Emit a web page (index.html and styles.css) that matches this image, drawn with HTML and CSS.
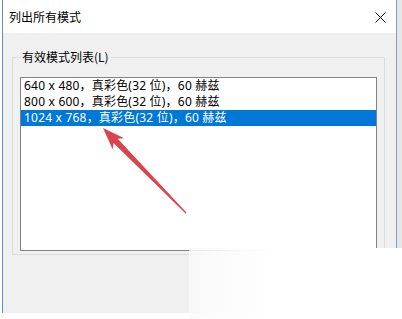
FILE: index.html
```html
<!DOCTYPE html>
<html lang="zh-CN">
<head>
<meta charset="utf-8">
<link rel="stylesheet" href="styles.css">
</head>
<body>
<div class="page">
  <div class="window">
    <div class="titlebar">
      <span class="title">列出所有模式</span>
      <svg class="close" width="11" height="11" viewBox="0 0 11 11"><path d="M0.5 0.5 L10.5 10.5 M10.5 0.5 L0.5 10.5" stroke="#111" stroke-width="1" fill="none"/></svg>
    </div>
    <div class="body">
      <fieldset class="group">
        <legend class="legend">有效模式列表(L)</legend>
        <div class="listbox">
          <div class="row">640 x 480，真彩色(32 位)，60 赫兹</div>
          <div class="row">800 x 600，真彩色(32 位)，60 赫兹</div>
          <div class="row selected">1024 x 768，真彩色(32 位)，60 赫兹</div>
        </div>
      </fieldset>
    </div>
  </div>
  <div class="behind"></div>
</div>
<div class="watermark"></div>
<svg class="arrow" width="402" height="319" viewBox="0 0 402 319">
  <polygon points="103,128 124.1,138.2 117.7,138.8 186.4,212.6 185.6,213.4 113.5,143 112.7,149.4" fill="#d9434c"/>
</svg>
</body>
</html>
```
FILE: styles.css
```css
html, body {
  margin: 0;
  padding: 0;
  background: #ffffff;
  width: 402px;
  height: 319px;
  overflow: hidden;
  font-family: "Noto Sans CJK SC", "Noto Sans", sans-serif;
  font-size: 12px;
  color: #000;
}
.page {
  display: flex;
  height: 313px;
  padding-left: 2px;
}
.window {
  width: 395px;
  box-sizing: border-box;
  border-left: 1px solid #5b93b8;
  border-right: 1px solid #7fa0b8;
  background: #f0f0f0;
  display: flex;
  flex-direction: column;
}
.behind {
  flex: 1;
  background: #e6e6e6;
}
.titlebar {
  height: 33px;
  background: #ffffff;
  display: flex;
  align-items: center;
  justify-content: space-between;
  padding: 0 10px 0 6px;
}
.title {
  font-size: 12px;
  line-height: 16px;
}
.close {
  display: block;
  margin-top: 1px;
}
.body {
  padding: 16px 11px 0 9px;
}
.group {
  margin: 0;
  border: 1px solid #dcdcdc;
  padding: 0 7px 3px;
}
.legend {
  padding: 0 2px;
  line-height: 16px;
  font-size: 12px;
}
.listbox {
  margin-top: 12px;
  height: 172px;
  border: 1px solid #828282;
  background: #ffffff;
}
.row {
  height: 16px;
  line-height: 16px;
  padding-left: 3px;
  white-space: nowrap;
  letter-spacing: 0.2px;
  font-family: "Noto Sans", "Noto Sans CJK SC", sans-serif;
}
.selected {
  background: #0078d7;
  color: #ffffff;
}
.watermark {
  position: absolute;
  left: 189px;
  top: 248px;
  width: 213px;
  height: 71px;
  background: linear-gradient(90deg, rgba(250,250,250,0.85), #ffffff 40%);
}
.arrow {
  position: absolute;
  left: 0;
  top: 0;
}
```
